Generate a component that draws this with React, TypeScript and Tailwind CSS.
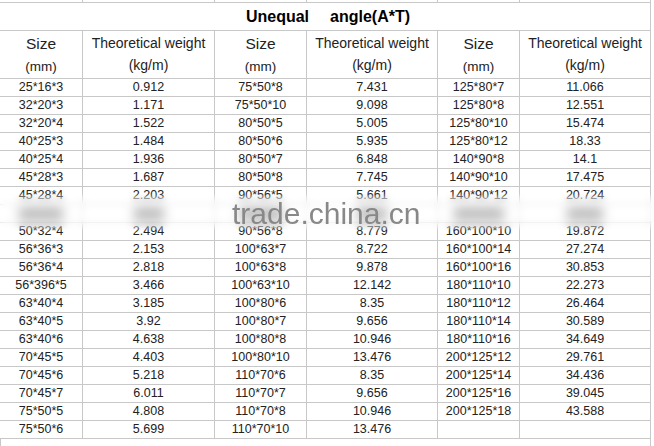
import React from "react";

const left: [string, string][] = [
  ["25*16*3", "0.912"],
  ["32*20*3", "1.171"],
  ["32*20*4", "1.522"],
  ["40*25*3", "1.484"],
  ["40*25*4", "1.936"],
  ["45*28*3", "1.687"],
  ["45*28*4", "2.203"],
  ["", ""],
  ["50*32*4", "2.494"],
  ["56*36*3", "2.153"],
  ["56*36*4", "2.818"],
  ["56*396*5", "3.466"],
  ["63*40*4", "3.185"],
  ["63*40*5", "3.92"],
  ["63*40*6", "4.638"],
  ["70*45*5", "4.403"],
  ["70*45*6", "5.218"],
  ["70*45*7", "6.011"],
  ["75*50*5", "4.808"],
  ["75*50*6", "5.699"],
];

const mid: [string, string][] = [
  ["75*50*8", "7.431"],
  ["75*50*10", "9.098"],
  ["80*50*5", "5.005"],
  ["80*50*6", "5.935"],
  ["80*50*7", "6.848"],
  ["80*50*8", "7.745"],
  ["90*56*5", "5.661"],
  ["", ""],
  ["90*56*8", "8.779"],
  ["100*63*7", "8.722"],
  ["100*63*8", "9.878"],
  ["100*63*10", "12.142"],
  ["100*80*6", "8.35"],
  ["100*80*7", "9.656"],
  ["100*80*8", "10.946"],
  ["100*80*10", "13.476"],
  ["110*70*6", "8.35"],
  ["110*70*7", "9.656"],
  ["110*70*8", "10.946"],
  ["110*70*10", "13.476"],
];

const right: [string, string][] = [
  ["125*80*7", "11.066"],
  ["125*80*8", "12.551"],
  ["125*80*10", "15.474"],
  ["125*80*12", "18.33"],
  ["140*90*8", "14.1"],
  ["140*90*10", "17.475"],
  ["140*90*12", "20.724"],
  ["", ""],
  ["160*100*10", "19.872"],
  ["160*100*14", "27.274"],
  ["160*100*16", "30.853"],
  ["180*110*10", "22.273"],
  ["180*110*12", "26.464"],
  ["180*110*14", "30.589"],
  ["180*110*16", "34.649"],
  ["200*125*12", "29.761"],
  ["200*125*14", "34.436"],
  ["200*125*16", "39.045"],
  ["200*125*18", "43.588"],
  ["", ""],
];

const HIDDEN = 7;

const cell =
  "border-r border-b border-[#c8c8c8] h-[18px] flex items-center justify-center text-[12.5px] leading-none text-[#222]";

function Smudge({ w }: { w: string }) {
  return (
    <div className="border-r border-b border-[#c8c8c8] h-[18px] flex items-center justify-center">
      <div className={`${w} h-[14px] bg-[#7a7a7a] blur-[5px]`} />
    </div>
  );
}

function SizeHead() {
  return (
    <div className="border-r border-b border-[#c8c8c8] h-[48px] flex flex-col items-center pt-[2px] text-[#222]">
      <div className="text-[15.5px] leading-[22px]">Size</div>
      <div className="text-[13.5px] leading-[23px]">(mm)</div>
    </div>
  );
}

function WeightHead() {
  return (
    <div className="border-r border-b border-[#c8c8c8] h-[48px] flex flex-col items-center pt-[2px] text-[#222]">
      <div className="text-[14px] leading-[20px] whitespace-nowrap">Theoretical weight</div>
      <div className="text-[14px] leading-[24px]">(kg/m)</div>
    </div>
  );
}

export default function App() {
  return (
    <div className="relative w-[654px] h-[446px] overflow-hidden bg-white font-['Liberation_Sans',Arial,sans-serif]">
      <div className="grid grid-cols-[83px_132px_92px_131px_82px_131px]">
        {/* partial row above */}
        {Array.from({ length: 6 }).map((_, i) => (
          <div key={"t" + i} className="h-[3px] border-r border-b border-[#c8c8c8]" />
        ))}
        {/* title */}
        <div className="col-span-6 h-[28px] border-r border-b border-[#c8c8c8] flex items-center justify-center pl-[6px] text-[16px] font-bold text-black">
          <span>Unequal</span>
          <span className="ml-[21px]">angle(A*T)</span>
        </div>
        {/* header */}
        <SizeHead />
        <WeightHead />
        <SizeHead />
        <WeightHead />
        <SizeHead />
        <WeightHead />
        {/* data */}
        {left.map((r, i) =>
          i === HIDDEN ? (
            <React.Fragment key={i}>
              <Smudge w="w-[44px]" />
              <Smudge w="w-[30px]" />
              <Smudge w="w-[44px]" />
              <Smudge w="w-[30px]" />
              <Smudge w="w-[50px]" />
              <Smudge w="w-[36px]" />
            </React.Fragment>
          ) : (
            <React.Fragment key={i}>
              <div className={cell}>{r[0]}</div>
              <div className={cell}>{r[1]}</div>
              <div className={cell}>{mid[i][0]}</div>
              <div className={cell}>{mid[i][1]}</div>
              <div className={cell}>{right[i][0]}</div>
              <div className={cell}>{right[i][1]}</div>
            </React.Fragment>
          )
        )}
        {/* partial row below */}
        <div className="col-span-6 h-[10px] border-l border-r border-[#c8c8c8]" />
      </div>

      {/* blurred watermark band */}
      <div className="absolute left-0 right-0 top-[193px] h-[38px] backdrop-blur-[3px] bg-white/50 [mask-image:linear-gradient(to_bottom,transparent,black_30%,black_70%,transparent)]" />
      <div className="absolute left-[232px] top-[198px] text-[30px] leading-[32px] text-[#888] whitespace-nowrap">
        trade.china.cn
      </div>
    </div>
  );
}
